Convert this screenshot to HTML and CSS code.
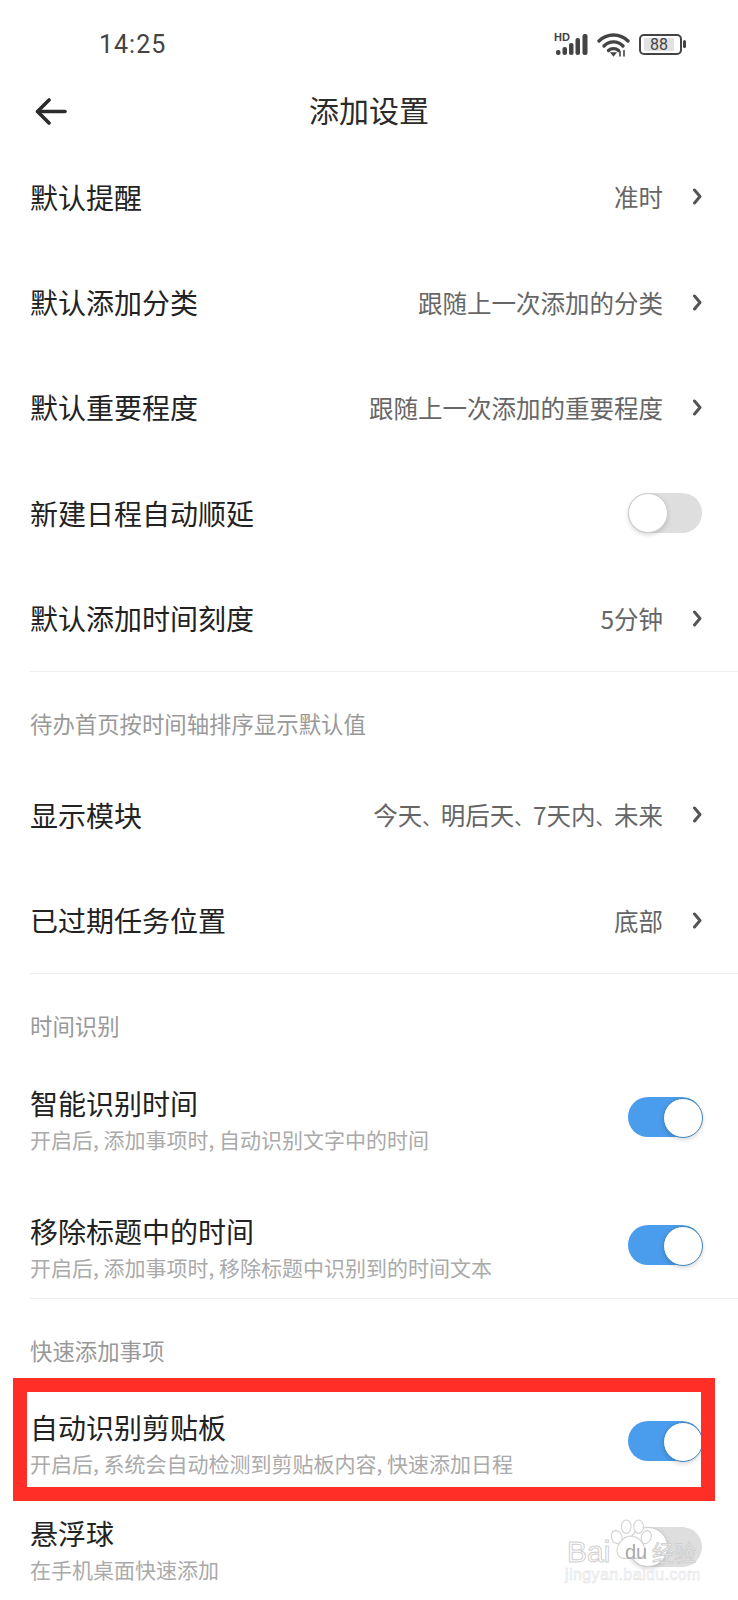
FILE: index.html
```html
<!DOCTYPE html>
<html lang="zh-CN">
<head>
    <meta charset="UTF-8">
    <meta name="viewport" content="width=device-width, initial-scale=1.0">
    <title>添加设置</title>
    <link rel="stylesheet" href="styles.css">
</head>
<body>
    <div class="status-bar">
        <span class="clock">14:25</span>
        <div class="status-icons">
            <svg class="signal" width="34" height="24" viewBox="0 0 34 24">
                <text class="hd" x="0" y="9">HD</text>
                <rect x="2" y="18" width="4.500" height="5" rx="2" fill="#444"/>
                <rect x="8.500" y="15" width="4.500" height="8" rx="2" fill="#444"/>
                <rect x="15" y="11" width="4.500" height="12" rx="2" fill="#444"/>
                <rect x="21.500" y="6" width="4.500" height="17" rx="2" fill="#444"/>
                <rect x="28.500" y="2" width="5" height="21" rx="2" fill="#444"/>
            </svg>
            <svg class="wifi" width="33" height="25" viewBox="0 0 33 25" fill="none" stroke="#444" stroke-width="3.400" stroke-linecap="round">
                <path d="M2 9 C10 1 23 1 31 9"/>
                <path d="M7 14 C12 8.500 21 8.500 26 14"/>
                <path d="M11.500 18.500 C14 16 19 16 21.500 18.500"/>
                <path d="M14.500 21 L16.500 23.500 L18.500 21 Z" fill="#444" stroke-width="1.500"/>
                <path d="M23 19.500 V24 M27 18.500 V24" stroke-width="1.600"/>
            </svg>
            <div class="battery">
                <div class="battery-body"><span class="battery-level">88</span></div>
                <div class="battery-nub"></div>
            </div>
        </div>
    </div>

    <div class="header">
        <svg class="back" width="32" height="27" viewBox="0 0 32 27" fill="none" stroke="#2b2b2b" stroke-width="3.600" stroke-linecap="round" stroke-linejoin="round">
            <path d="M30 13.500 H3"/>
            <path d="M14 2 L2.500 13.500 L14 25"/>
        </svg>
        <h1 class="title">添加设置</h1>
    </div>

    <div class="group">
        <div class="row"><span class="label">默认提醒</span><span class="value">准时</span><svg class="chevron" width="10" height="17" viewBox="0 0 10 17"><path d="M2.500 2 L8 8.500 L2.500 15"/></svg></div>
        <div class="row"><span class="label">默认添加分类</span><span class="value">跟随上一次添加的分类</span><svg class="chevron" width="10" height="17" viewBox="0 0 10 17"><path d="M2.500 2 L8 8.500 L2.500 15"/></svg></div>
        <div class="row"><span class="label">默认重要程度</span><span class="value">跟随上一次添加的重要程度</span><svg class="chevron" width="10" height="17" viewBox="0 0 10 17"><path d="M2.500 2 L8 8.500 L2.500 15"/></svg></div>
        <div class="row"><span class="label">新建日程自动顺延</span><div class="switch"></div></div>
        <div class="row"><span class="label">默认添加时间刻度</span><span class="value">5分钟</span><svg class="chevron" width="10" height="17" viewBox="0 0 10 17"><path d="M2.500 2 L8 8.500 L2.500 15"/></svg></div>
    </div>

    <div class="section">待办首页按时间轴排序显示默认值</div>
    <div class="group">
        <div class="row"><span class="label">显示模块</span><span class="value">今天<span class="sep">、</span>明后天<span class="sep">、</span>7天内<span class="sep">、</span>未来</span><svg class="chevron" width="10" height="17" viewBox="0 0 10 17"><path d="M2.500 2 L8 8.500 L2.500 15"/></svg></div>
        <div class="row"><span class="label">已过期任务位置</span><span class="value">底部</span><svg class="chevron" width="10" height="17" viewBox="0 0 10 17"><path d="M2.500 2 L8 8.500 L2.500 15"/></svg></div>
    </div>

    <div class="section">时间识别</div>
    <div class="group spaced">
        <div class="row">
            <div class="text"><div class="label">智能识别时间</div><div class="sub">开启后, 添加事项时, 自动识别文字中的时间</div></div>
            <div class="switch on"></div>
        </div>
        <div class="row">
            <div class="text"><div class="label">移除标题中的时间</div><div class="sub">开启后, 添加事项时, 移除标题中识别到的时间文本</div></div>
            <div class="switch on"></div>
        </div>
    </div>

    <div class="section">快速添加事项</div>
    <div class="row">
        <div class="text"><div class="label">自动识别剪贴板</div><div class="sub">开启后, 系统会自动检测到剪贴板内容, 快速添加日程</div></div>
        <div class="switch on"></div>
    </div>
    <div class="row">
        <div class="text"><div class="label">悬浮球</div><div class="sub">在手机桌面快速添加</div></div>
        <div class="switch"></div>
    </div>

    <!-- annotation + watermark sit on top of the screenshot -->
    <div class="highlight"></div>
    <div class="watermark">
        <svg class="paw" width="42" height="42" viewBox="0 0 44 44" fill="#fff" stroke="#d4d4d4" stroke-width="1.200">
            <ellipse cx="7" cy="19" rx="5.500" ry="7" transform="rotate(-20 7 19)"/>
            <ellipse cx="17" cy="8" rx="5" ry="7"/>
            <ellipse cx="30" cy="8" rx="5" ry="7"/>
            <ellipse cx="38" cy="19" rx="5" ry="7" transform="rotate(20 38 19)"/>
            <path d="M22 18 C31 18 39 29 36 37 C33 43 27 41 22 41 C17 41 11 43 8 37 C5 29 13 18 22 18 Z"/>
        </svg>
        <span class="wm-bai">Bai</span>
        <span class="wm-du">du</span>
        <span class="wm-jy">经验</span>
        <span class="wm-url">jingyan.baidu.com</span>
    </div>
</body>
</html>
```

FILE: styles.css
```css
* {
    box-sizing: border-box;
}
html, body {
    margin: 0;
    padding: 0;
}
body {
    position: relative;
    width: 738px;
    height: 1600px;
    overflow: hidden;
    background-color: #fff;
    color: #222;
    font-family: "Noto Sans CJK SC", "Noto Sans", sans-serif;
}

.status-bar {
    display: flex;
    align-items: center;
    justify-content: space-between;
    height: 88px;
    padding: 0 52px 0 99px;
}
.clock {
    font-family: Roboto, sans-serif;
    font-size: 25px;
    font-weight: 400;
    letter-spacing: 1px;
    color: #444;
}
.status-icons {
    display: flex;
    align-items: center;
    gap: 9px;
}
.signal .hd {
    font-family: "Liberation Sans", sans-serif;
    font-size: 11px;
    font-weight: bold;
    fill: #444;
}
.battery {
    display: flex;
    align-items: center;
    gap: 1px;
}
.battery-body {
    display: flex;
    align-items: center;
    width: 43px;
    height: 21px;
    padding: 2px 3px;
    border: 2px solid #444;
    border-radius: 5px;
}
.battery-level {
    width: 30px;
    height: 13px;
    background-color: #e2e2e2;
    color: #444;
    font-family: Roboto, sans-serif;
    font-size: 16px;
    line-height: 13px;
    text-align: center;
}
.battery-nub {
    width: 3px;
    height: 8px;
    border-radius: 2px;
    background-color: #444;
}

.header {
    display: flex;
    align-items: center;
    justify-content: center;
    position: relative;
    height: 46px;
    margin-bottom: 10px;
}
.back {
    position: absolute;
    left: 35px;
    top: 10px;
}
.title {
    margin: 0 0 4px;
    font-size: 30px;
    font-weight: 400;
    line-height: 42px;
    color: #2b2b2b;
}

.group {
    margin-left: 30px;
    border-bottom: 1px solid #eee;
}
.group .row {
    margin-left: -30px;
}
.group.spaced {
    display: flex;
    flex-direction: column;
    gap: 22px;
    margin-top: 1px;
}
.row {
    display: flex;
    align-items: center;
    height: 105.400px;
    padding: 0 36px 0 30px;
}
.label {
    flex: 1;
    font-size: 28px;
    line-height: 36px;
    color: #222;
}
.value {
    margin-right: 29px;
    font-size: 24.500px;
    color: #666;
}
.sep {
    font-size: 18.500px;
}
.chevron {
    fill: none;
    stroke: #555;
    stroke-width: 3;
    stroke-linecap: round;
    stroke-linejoin: round;
}
.text {
    flex: 1;
    padding-top: 8px;
}
.sub {
    font-size: 21px;
    line-height: 36px;
    color: #aaa;
}

.section {
    height: 90px;
    padding: 33px 0 0 30px;
    font-size: 22.400px;
    line-height: 36px;
    color: #999;
}

.switch {
    position: relative;
    flex: none;
    width: 74px;
    height: 40px;
    border-radius: 20px;
    background-color: #dedede;
}
.switch::after {
    content: "";
    position: absolute;
    left: 0;
    top: 0;
    width: 38px;
    height: 38px;
    border: 1px solid #ccc;
    border-radius: 50%;
    background-color: #fff;
    box-shadow: 0 2px 4px rgba(0, 0, 0, 0.15);
}
.switch.on {
    background-color: #4a9ced;
}
.switch.on::after {
    left: 35px;
    top: 1px;
    border-color: #3f83c4;
}

.highlight {
    position: absolute;
    left: 13px;
    top: 1378px;
    width: 702px;
    height: 123px;
    border: 14px solid #ff2e27;
}

.watermark {
    position: absolute;
    left: 560px;
    top: 1515px;
    width: 150px;
    height: 75px;
    color: rgba(255, 255, 255, 0.85);
    font-family: "Liberation Sans", sans-serif;
    -webkit-text-stroke: 1px #d0d0d0;
}
.watermark span {
    position: absolute;
}
.paw {
    position: absolute;
    left: 50px;
    top: 4px;
}
.wm-bai {
    left: 7px;
    top: 20px;
    font-size: 30px;
    line-height: 34px;
}
.wm-du {
    left: 65px;
    top: 25px;
    font-size: 20px;
    line-height: 24px;
    color: #aaa;
    -webkit-text-stroke: 0;
}
.wm-jy {
    left: 92px;
    top: 22px;
    font-family: "Noto Sans CJK SC", sans-serif;
    font-size: 22px;
    line-height: 28px;
}
.wm-url {
    left: 5px;
    top: 50px;
    font-size: 16px;
    line-height: 20px;
    letter-spacing: 0.400px;
    color: #fff;
    -webkit-text-stroke: 0.500px #ddd;
}
```
